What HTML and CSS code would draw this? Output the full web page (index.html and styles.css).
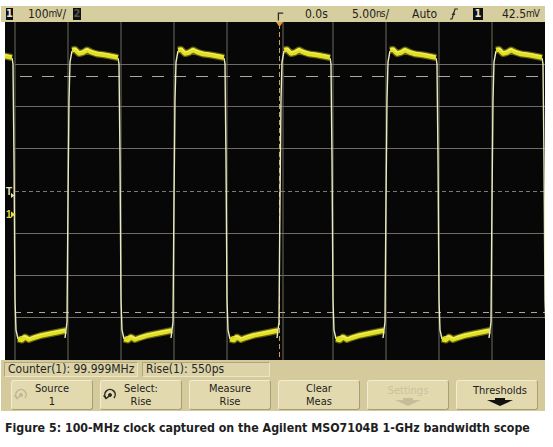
FILE: index.html
```html
<!DOCTYPE html>
<html lang="en">
	<head>
		<meta charset="utf-8">
		<title>Scope capture</title>
		<link rel="stylesheet" href="styles.css">
	</head>
	<body>
		<div class="scope">
			<div class="topbar">
				<span class="chbox on c1">1</span>
				<span class="cell c2">100<span class="unit">mV</span>/</span>
				<span class="chbox off">2</span>
				<span class="cell c3">
					<svg width="10" height="16" viewBox="0 0 10 16"><path d="M3 16 V7 H9" fill="none" stroke="#2a2a22" stroke-width="1.6"/></svg>
				</span>
				<span class="cell c4">0.0s</span>
				<span class="cell c5">5.00<span class="unit">ns</span>/</span>
				<span class="cell c6">Auto</span>
				<span class="cell c7">
					<svg width="8" height="12" viewBox="0 0 8 12"><path d="M0 11 H2 L5 1 H8" fill="none" stroke="#2a2a22" stroke-width="1.2"/><path d="M2 7 L3.6 4.6 L4.8 7" fill="none" stroke="#2a2a22" stroke-width="1"/></svg>
				</span>
				<span class="chbox on c8">1</span>
				<span class="cell c9">42.5<span class="unit">mV</span></span>
			</div>

			<div class="display">
				<svg width="540" height="338" viewBox="5 22 540 338">
					<defs>
						<g id="period">
							<path class="band-under" d="M3 50 L6 49.5 L10 53.5 L14 52.5 L18 50 L22 52 L28 54 L36 55 L44 56.5 L49 57.5"/>
							<path class="band-under" d="M55 339 L59 340 L62 337 L66 339.5 L70 338 L78 335.5 L88 333.5 L98 331.5 L103 330.5"/>
							<path class="edge" d="M-4 338 L-2 322 L-1 200 L0 100 L1 62 L3 51"/>
							<path class="edge" d="M49 58 L50 64 L51 160 L52 300 L53 330 L55 339"/>
							<path class="band" d="M3 50 L6 49.5 L10 53.5 L14 52.5 L18 50 L22 52 L28 54 L36 55 L44 56.5 L49 57.5"/>
							<path class="band" d="M55 339 L59 340 L62 337 L66 339.5 L70 338 L78 335.5 L88 333.5 L98 331.5 L103 330.5"/>
							<path class="band-hi" d="M4 49 L7 48.5 L10 52 L14 51 L18 49 L24 51.5 L34 53 L44 55 L48 56"/>
							<path class="band-hi" d="M57 337 L61 336 L66 338 L72 336 L84 333 L96 330.5 L102 329.5"/>
						</g>
					</defs>

					<g class="grid">
						<line x1="15" y1="22" x2="15" y2="360"/>
						<line x1="68" y1="22" x2="68" y2="360"/>
						<line x1="121" y1="22" x2="121" y2="360"/>
						<line x1="174" y1="22" x2="174" y2="360"/>
						<line x1="227" y1="22" x2="227" y2="360"/>
						<line x1="283" y1="22" x2="283" y2="360"/>
						<line x1="333" y1="22" x2="333" y2="360"/>
						<line x1="386" y1="22" x2="386" y2="360"/>
						<line x1="439" y1="22" x2="439" y2="360"/>
						<line x1="492" y1="22" x2="492" y2="360"/>
						<line x1="15" y1="64.5" x2="545" y2="64.5"/>
						<line x1="15" y1="106.5" x2="545" y2="106.5"/>
						<line x1="15" y1="148.5" x2="545" y2="148.5"/>
						<line x1="15" y1="233.5" x2="545" y2="233.5"/>
						<line x1="15" y1="275.5" x2="545" y2="275.5"/>
						<line x1="15" y1="317.5" x2="545" y2="317.5"/>
					</g>
					<line class="center-dots" x1="15" y1="191.5" x2="545" y2="191.5"/>
					<line class="thresh-hi" x1="20" y1="76.5" x2="545" y2="76.5"/>
					<line class="thresh-lo" x1="15" y1="312.5" x2="545" y2="312.5"/>
					<line class="trig-line" x1="279.5" y1="24" x2="279.5" y2="360"/>
					<path class="trig-mark" d="M276 22 H283 L279.5 27 Z"/>

					<use href="#period" x="-37"/>
					<use href="#period" x="69"/>
					<use href="#period" x="175"/>
					<use href="#period" x="281"/>
					<use href="#period" x="387"/>
					<use href="#period" x="493"/>

					<text class="mark-t" x="6" y="195">T</text>
					<path class="mark-t-arrow" d="M11 193 L14.5 195.5 L11 198 Z"/>
					<text class="mark-1" x="6" y="218">1</text>
					<path class="mark-1-arrow" d="M11 211.5 L15.5 214.5 L11 217.5 Z"/>
				</svg>
			</div>

			<div class="status">
				<span class="readout counter">Counter(1): 99.999MHz</span>
				<span class="readout rise">Rise(1): 550ps</span>
			</div>

			<div class="softkeys">
				<div class="key">
					<svg class="knob dim" width="14" height="14" viewBox="0 0 14 14"><path d="M3 10 A5.2 5.2 0 1 1 11 10" fill="none" stroke-width="1.4"/><path d="M0.6 7.4 L3 10.6 L5.8 8.4" fill="none" stroke-width="1.3"/><circle cx="7" cy="7" r="1.4"/></svg>
					<span class="label"><span>Source</span><span>1</span></span>
				</div>
				<div class="key">
					<svg class="knob" width="14" height="14" viewBox="0 0 14 14"><path d="M3 10 A5.2 5.2 0 1 1 11 10" fill="none" stroke-width="1.5"/><path d="M0.6 7.4 L3 10.6 L5.8 8.4" fill="none" stroke-width="1.4"/><circle cx="7" cy="7" r="1.5"/></svg>
					<span class="label"><span>Select:</span><span>Rise</span></span>
				</div>
				<div class="key">
					<span></span>
					<span class="label"><span>Measure</span><span>Rise</span></span>
				</div>
				<div class="key">
					<span></span>
					<span class="label"><span>Clear</span><span>Meas</span></span>
				</div>
				<div class="key disabled">
					<span></span>
					<span class="label"><span>Settings</span>
						<svg class="arrow" width="26" height="8" viewBox="0 0 26 8"><path d="M8 0 H18 V2 H26 L13 8 L0 2 H8 Z"/></svg>
					</span>
				</div>
				<div class="key">
					<span></span>
					<span class="label"><span>Thresholds</span>
						<svg class="arrow" width="26" height="8" viewBox="0 0 26 8"><path d="M8 0 H18 V2 H26 L13 8 L0 2 H8 Z"/></svg>
					</span>
				</div>
			</div>
		</div>

		<p class="caption">Figure 5: 100-MHz clock captured on the Agilent MSO7104B 1-GHz bandwidth scope</p>
	</body>
</html>
```

FILE: styles.css
```css
body {
	margin: 0;
	background-color: #ffffff;
	font-family: 'DejaVu Sans Condensed', 'Liberation Sans', sans-serif;
	color: #22221c;
}
.scope {
	margin: 6px 0 0 1px;
	width: 544px;
}

/* top info line */
.topbar {
	display: flex;
	align-items: center;
	height: 16px;
	padding-left: 5px;
	background-color: #d7cea0;
	font-size: 12px;
	line-height: 16px;
	color: #22221a;
}
.cell {
	display: flex;
	align-items: center;
	white-space: nowrap;
}
.unit {
	font-size: 10px;
	letter-spacing: -1px;
	margin-right: 1px;
}
.chbox {
	display: flex;
	justify-content: center;
	align-items: center;
	height: 12px;
	background-color: #111111;
	font-size: 11px;
	font-weight: bold;
}
.chbox.on {
	color: #e6e6d6;
}
.chbox.off {
	width: 8px;
	color: #55554a;
}
.c1 {
	width: 7px;
}
.c2 {
	width: 45px;
	margin-left: 15px;
}
.c3 {
	width: 8px;
	margin-left: 195px;
	align-self: flex-end;
}
.c4 {
	width: 47px;
	margin-left: 21px;
}
.c5 {
	width: 60px;
}
.c6 {
	width: 38px;
}
.c7 {
	width: 8px;
}
.c8 {
	width: 10px;
	margin-left: 15px;
}
.c9 {
	margin-left: 19px;
}

/* screen */
.display {
	margin-left: 4px;
	width: 540px;
	height: 338px;
	background-color: #070707;
}
.display svg {
	display: block;
}
.grid line {
	stroke: #6c6c62;
	stroke-width: 1;
}
.center-dots {
	stroke: #7a7a70;
	stroke-dasharray: 4 3;
}
.thresh-hi {
	stroke: #a9a99c;
	stroke-dasharray: 12 10;
}
.thresh-lo {
	stroke: #a9a99c;
	stroke-dasharray: 6 6;
}
.trig-line {
	stroke: #c8a05a;
	stroke-dasharray: 5 3;
}
.trig-mark {
	fill: #e39a3a;
}
.edge {
	fill: none;
	stroke: #ecebbd;
	stroke-width: 1.4;
}
.band-under {
	fill: none;
	stroke: #8f8a14;
	stroke-width: 7;
	stroke-linejoin: round;
	opacity: 0.7;
}
.band {
	fill: none;
	stroke: #e2e022;
	stroke-width: 4.5;
	stroke-linejoin: round;
}
.band-hi {
	fill: none;
	stroke: #f6f47a;
	stroke-width: 1.2;
	opacity: 0.8;
}
.mark-t, .mark-1 {
	font-family: 'Liberation Sans', sans-serif;
	font-size: 10px;
	font-weight: bold;
}
.mark-t {
	fill: #e8e6b0;
}
.mark-1 {
	fill: #e0de40;
}
.mark-t-arrow {
	fill: #e8e6b0;
}
.mark-1-arrow {
	fill: #e0de40;
}

/* measurement line */
.status {
	display: flex;
	gap: 4px;
	height: 18px;
	padding: 2px 0 0 3px;
	box-sizing: border-box;
	background-color: #d4ca9b;
}
.readout {
	height: 15px;
	padding-left: 3px;
	box-sizing: border-box;
	border: 1px solid #b0a67c;
	border-bottom-color: #ece5c4;
	border-right-color: #ece5c4;
	background-color: #dcd3a8;
	font-size: 12px;
	line-height: 13px;
	color: #26261e;
	white-space: nowrap;
}
.counter {
	width: 134px;
}
.rise {
	width: 128px;
}

/* softkeys */
.softkeys {
	display: flex;
	gap: 7px;
	height: 33px;
	padding: 2px 0 0 10px;
	box-sizing: border-box;
	background-color: #d4ca9b;
}
.key {
	display: grid;
	grid-template-columns: 16px 1fr 16px;
	align-items: center;
	width: 82px;
	height: 30px;
	box-sizing: border-box;
	border: 1px solid #f2ecd2;
	border-right-color: #a79e78;
	border-bottom-color: #a79e78;
	border-radius: 3px;
	background-color: #e2d9af;
	font-size: 11px;
	line-height: 13px;
	color: #22221c;
}
.label {
	display: flex;
	flex-direction: column;
	align-items: center;
	text-align: center;
	white-space: nowrap;
}
.knob {
	margin-left: 2px;
	stroke: #2a2a22;
	fill: #2a2a22;
}
.knob.dim {
	stroke: #bdb593;
	fill: #bdb593;
}
.arrow {
	display: block;
	margin-top: 1px;
	fill: #111111;
}
.key.disabled {
	color: #c9c19e;
}
.key.disabled .arrow {
	fill: #c6be9a;
}

.caption {
	margin: 9px 0 0 5px;
	font-size: 12.3px;
	font-weight: bold;
	line-height: 16px;
	color: #1e1e1e;
	white-space: nowrap;
}
```
